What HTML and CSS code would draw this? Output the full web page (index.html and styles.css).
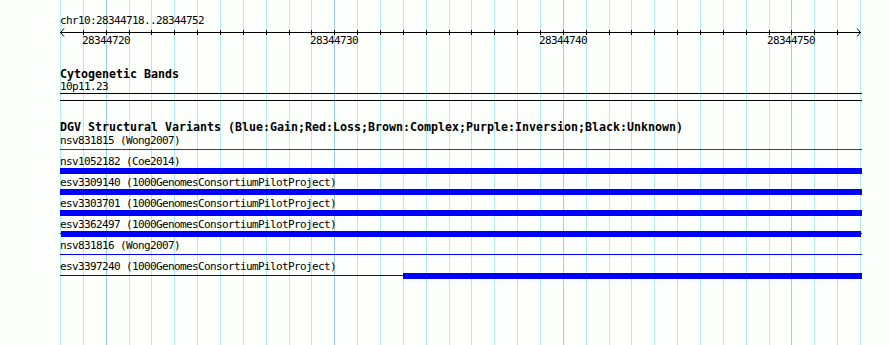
FILE: index.html
```html
<!DOCTYPE html>
<html lang="en">
<head>
    <meta charset="UTF-8">
    <title>chr10:28344718..28344752</title>
    <link rel="stylesheet" href="styles.css">
</head>
<body>
    <div class="browser">
        <!-- grid lines, one every base pair -->
        <svg class="grid" width="890" height="345" viewBox="0 0 890 345">
            <path class="grid-minor" d="M60.5 0V345M83.5 0V345M129.5 0V345M151.5 0V345M174.5 0V345M197.5 0V345M220.5 0V345M243.5 0V345M266.5 0V345M289.5 0V345M311.5 0V345M357.5 0V345M380.5 0V345M403.5 0V345M426.5 0V345M449.5 0V345M471.5 0V345M494.5 0V345M517.5 0V345M540.5 0V345M586.5 0V345M609.5 0V345M631.5 0V345M654.5 0V345M677.5 0V345M700.5 0V345M723.5 0V345M746.5 0V345M769.5 0V345M814.5 0V345M837.5 0V345M860.5 0V345"/>
            <path class="grid-major" d="M106.5 0V345M334.5 0V345M563.5 0V345M791.5 0V345"/>
        </svg>

        <div class="ruler">
            <div class="ruler-title">chr10:28344718..28344752</div>
            <svg class="axis" width="890" height="8" viewBox="0 0 890 8">
                <path class="axis-line" d="M60 5.5H861"/>
                <path class="axis-ticks" d="M83.5 3V8M106.5 3V8M129.5 3V8M151.5 3V8M174.5 3V8M197.5 3V8M220.5 3V8M243.5 3V8M266.5 3V8M289.5 3V8M311.5 3V8M334.5 3V8M357.5 3V8M380.5 3V8M403.5 3V8M426.5 3V8M449.5 3V8M471.5 3V8M494.5 3V8M517.5 3V8M540.5 3V8M563.5 3V8M586.5 3V8M609.5 3V8M631.5 3V8M654.5 3V8M677.5 3V8M700.5 3V8M723.5 3V8M746.5 3V8M769.5 3V8M791.5 3V8M814.5 3V8M837.5 3V8"/>
                <polyline class="axis-arrow" points="64,1.5 60.5,5.5 64,9.5"/>
                <polyline class="axis-arrow" points="857,1.5 860.5,5.5 857,9.5"/>
            </svg>
            <div class="tick-labels">
                <span style="left: 82px">28344720</span>
                <span style="left: 310px">28344730</span>
                <span style="left: 539px">28344740</span>
                <span style="left: 767px">28344750</span>
            </div>
        </div>

        <section class="track cytoband">
            <h2 class="track-title">Cytogenetic Bands</h2>
            <div class="feature-label">10p11.23</div>
            <div class="band"></div>
        </section>

        <section class="track dgv">
            <h2 class="track-title">DGV Structural Variants (Blue:Gain;Red:Loss;Brown:Complex;Purple:Inversion;Black:Unknown)</h2>

            <div class="feature">
                <div class="feature-label">nsv831815 (Wong2007)</div>
                <div class="glyph"><div class="line loss" style="left: 0; width: 802px"></div></div>
            </div>
            <div class="feature">
                <div class="feature-label">nsv1052182 (Coe2014)</div>
                <div class="glyph"><div class="bar gain" style="left: 0; width: 802px"></div></div>
            </div>
            <div class="feature">
                <div class="feature-label">esv3309140 (1000GenomesConsortiumPilotProject)</div>
                <div class="glyph"><div class="bar gain" style="left: 0; width: 802px"></div></div>
            </div>
            <div class="feature">
                <div class="feature-label">esv3303701 (1000GenomesConsortiumPilotProject)</div>
                <div class="glyph"><div class="bar gain" style="left: 0; width: 802px"></div></div>
            </div>
            <div class="feature">
                <div class="feature-label">esv3362497 (1000GenomesConsortiumPilotProject)</div>
                <div class="glyph">
                    <div class="line gain" style="left: 0; width: 802px"></div>
                    <div class="bar gain" style="left: 1px; width: 800px"></div>
                </div>
            </div>
            <div class="feature">
                <div class="feature-label">nsv831816 (Wong2007)</div>
                <div class="glyph"><div class="line gain" style="left: 0; width: 802px"></div></div>
            </div>
            <div class="feature">
                <div class="feature-label">esv3397240 (1000GenomesConsortiumPilotProject)</div>
                <div class="glyph">
                    <div class="line gain" style="left: 0; width: 343px"></div>
                    <div class="bar gain" style="left: 343px; width: 459px"></div>
                </div>
            </div>
        </section>
    </div>
</body>
</html>
```

FILE: styles.css
```css
body {
    margin: 0;
    background-color: #fcfffc;
    color: #000;
    font-family: "DejaVu Sans Mono", "Liberation Mono", monospace;
}
.browser {
    position: relative;
    z-index: 0;
    width: 890px;
    height: 345px;
    overflow: hidden;
}
.grid {
    position: absolute;
    top: 0;
    left: 0;
    z-index: -1;
}
.grid-minor {
    stroke: #afeeee;
    stroke-width: 1;
}
.grid-major {
    stroke: #9cd0e8;
    stroke-width: 1;
}
.ruler {
    padding-top: 15px;
}
.ruler-title {
    padding-left: 60px;
    font-size: 11px;
    letter-spacing: -0.62px;
    line-height: 12px;
}
.axis {
    display: block;
    overflow: visible;
}
.axis-line,
.axis-ticks,
.axis-arrow {
    stroke: #000;
    stroke-width: 1;
    fill: none;
}
.tick-labels {
    position: relative;
    height: 12px;
    font-size: 11px;
    letter-spacing: -0.62px;
    line-height: 12px;
}
.tick-labels span {
    position: absolute;
    top: 0;
    width: 48px;
}
.track {
    width: 802px;
    padding-left: 60px;
}
.track-title {
    margin: 0;
    font-size: 11.63px;
    font-weight: bold;
    line-height: 13px;
    white-space: nowrap;
}
.cytoband {
    margin-top: 21px;
}
.feature-label {
    font-size: 11px;
    letter-spacing: -0.62px;
    line-height: 11px;
    white-space: nowrap;
}
.band {
    height: 6px;
    margin-top: 1px;
    border-top: 1px solid #000;
    border-bottom: 1px solid #000;
}
.dgv {
    margin-top: 20px;
}
.dgv .track-title {
    margin-bottom: 1px;
}
.glyph {
    position: relative;
    height: 10px;
}
.bar {
    position: absolute;
    top: 1px;
    height: 6px;
}
.line {
    position: absolute;
    top: 3px;
    height: 1px;
}
.gain {
    background-color: #0000ff;
}
.loss {
    background-color: #e00000;
}
```
